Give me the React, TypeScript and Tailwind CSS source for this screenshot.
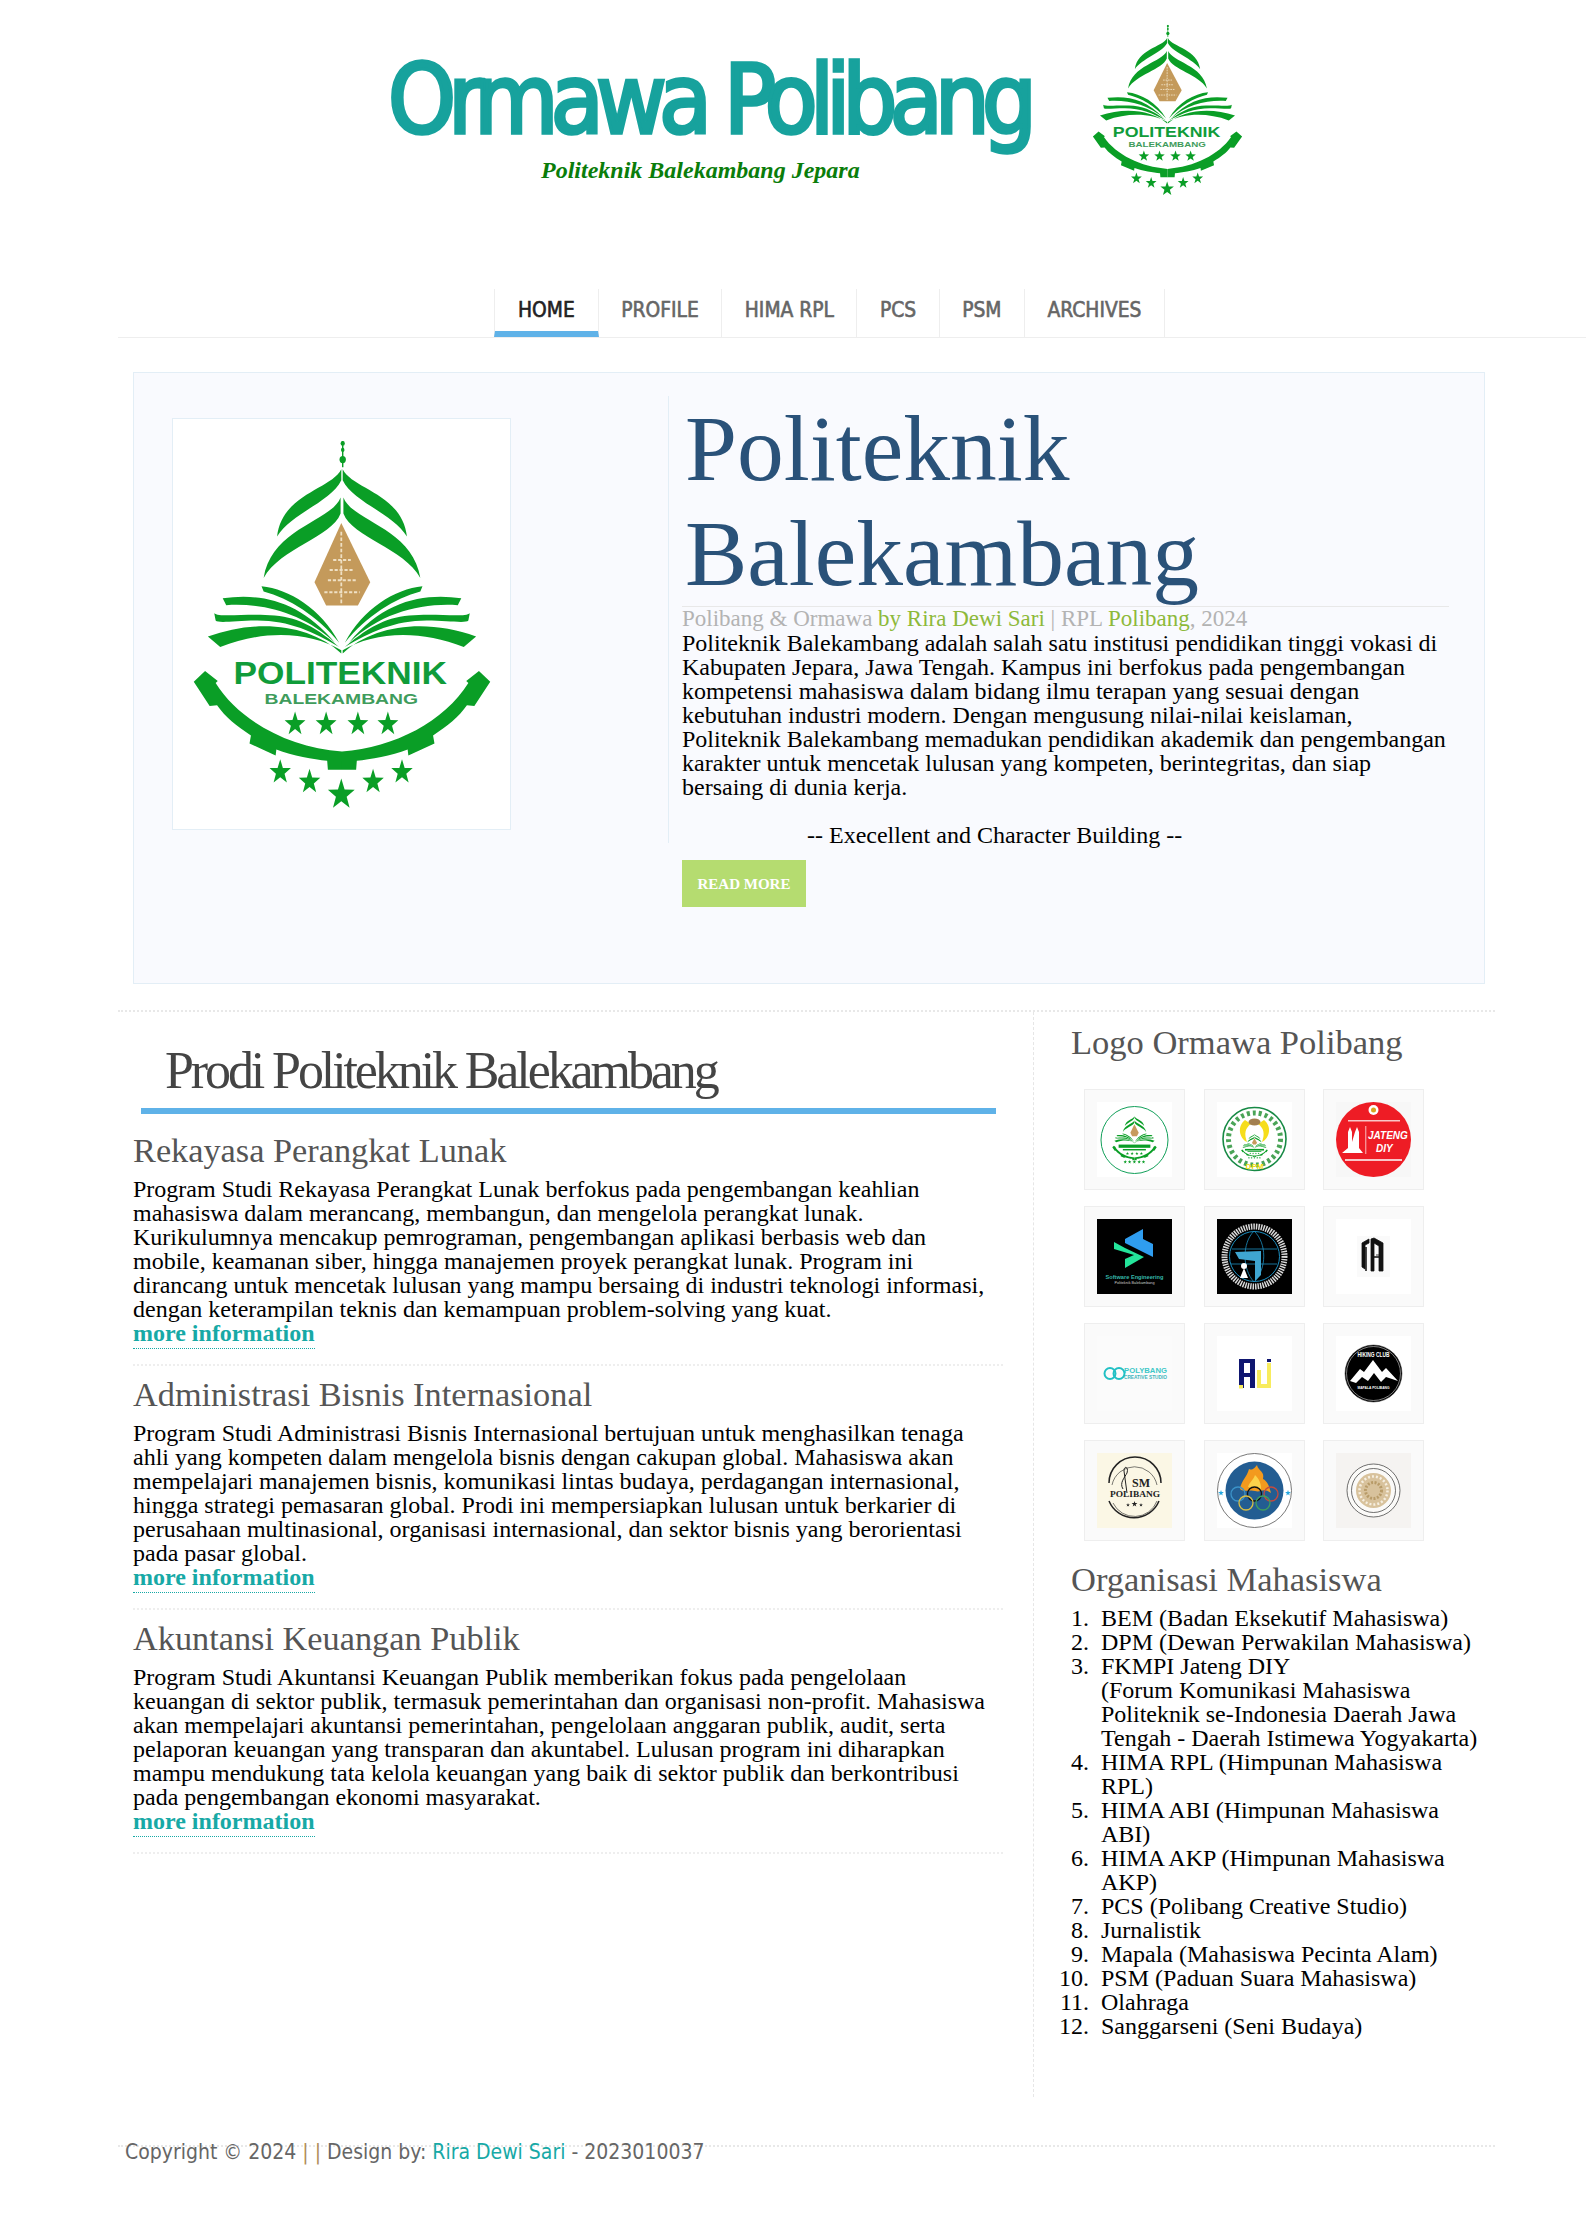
import React from 'react';

const starPoints = (cx: number, cy: number, r: number) => {
  const pts: string[] = [];
  for (let i = 0; i < 10; i++) {
    const rad = i % 2 === 0 ? r : r * 0.4;
    const a = (Math.PI / 5) * i - Math.PI / 2;
    pts.push(`${(cx + rad * Math.cos(a)).toFixed(1)},${(cy + rad * Math.sin(a)).toFixed(1)}`);
  }
  return pts.join(' ');
};

// half of the emblem, mirrored for the right side
const EmblemHalf = ({ color }: { color: string }) => (
  <g fill={color}>
    <path d="M618 265C590 315 450 325 436 432C475 375 590 345 618 292Z" />
    <path d="M616 335C590 395 420 410 398 535C445 460 590 435 616 375Z" />
    <path d="M392 555C470 562 560 610 612 695C550 628 470 585 398 568Z" />
    <path d="M282 585C390 572 500 590 600 695C510 622 400 596 292 602Z" />
    <path d="M258 622C275 636 400 615 480 636C540 652 590 690 612 706C540 668 470 640 380 640C320 640 270 648 262 640Z" />
    <path d="M240 680C380 635 530 650 618 722L618 714C530 668 400 662 275 706Z" />
    <path d="M232 765L268 790L262 795C330 890 470 955 620 965L620 1010L580 1010L578 988C540 985 480 975 434 960L432 975L358 945L362 925C320 900 290 880 266 850L245 852L200 792Z" />
  </g>
);

const PolibangEmblem = ({ className }: { className: string }) => {
  const green = '#0a9e26';
  return (
    <svg viewBox="195 190 850 920" preserveAspectRatio="none" className={className}>
      <g fill={green}>
        <rect x="620" y="195" width="4" height="65" />
        <circle cx="622" cy="201" r="6" />
        <circle cx="622" cy="217" r="5" />
        <circle cx="622" cy="241" r="9" />
      </g>
      <EmblemHalf color={green} />
      <g transform="matrix(-1 0 0 1 1240 0)">
        <EmblemHalf color={green} />
      </g>
      <path d="M618 398L700 545L665 603L575 603L542 545Z" fill="#c49a5b" />
      <path d="M618 420V600M580 540H660M570 570H670M595 490H645M585 515H650" stroke="#efe0c4" strokeWidth="5" strokeDasharray="9 5" fill="none" />
      <text x="615" y="797" textAnchor="middle" textLength="605" lengthAdjust="spacingAndGlyphs" fontFamily="Liberation Sans" fontWeight="700" fontSize="78" fill="#109c3a">POLITEKNIK</text>
      <text x="618" y="846" textAnchor="middle" textLength="435" lengthAdjust="spacingAndGlyphs" fontFamily="Liberation Sans" fontWeight="700" fontSize="38" fill="#3f9c5c">BALEKAMBANG</text>
      <g fill={green}>
        {[487, 575, 665, 750].map((x) => (
          <polygon key={x} points={starPoints(x, 897, 31)} />
        ))}
        {[[445, 1016, 32], [528, 1040, 32], [618, 1072, 40], [708, 1040, 32], [790, 1016, 32]].map(([x, y, r]) => (
          <polygon key={x} points={starPoints(x, y, r)} />
        ))}
      </g>
    </svg>
  );
};

const TileSvg = ({ children, bg = '#ffffff' }: { children: React.ReactNode; bg?: string }) => (
  <svg viewBox="0 0 75 75" className="h-[75px] w-[75px]">
    <rect width="75" height="75" fill={bg} />
    {children}
  </svg>
);

const MiniEmblem = ({ x, y, w, h }: { x: number; y: number; w: number; h: number }) => (
  <svg x={x} y={y} width={w} height={h} viewBox="195 190 850 920" preserveAspectRatio="none">
    <g fill="#0a9e26">
      <EmblemHalf color="#0a9e26" />
      <g transform="matrix(-1 0 0 1 1240 0)">
        <EmblemHalf color="#0a9e26" />
      </g>
      <path d="M618 398L700 545L665 603L575 603L542 545Z" fill="#c79a5d" />
      <rect x="320" y="745" width="600" height="55" />
      <rect x="400" y="820" width="435" height="25" />
      {[487, 575, 665, 750].map((x) => (
        <polygon key={x} points={starPoints(x, 897, 31)} />
      ))}
      {[445, 528, 618, 708, 790].map((x) => (
        <polygon key={x} points={starPoints(x, 1040, 34)} />
      ))}
    </g>
  </svg>
);

const logos: React.ReactNode[] = [
  <TileSvg key="bem">
    <circle cx="37.5" cy="38" r="33.5" fill="none" stroke="#12a05a" strokeWidth="1" />
    <MiniEmblem x={15} y={10} w={45} h={54} />
  </TileSvg>,
  <TileSvg key="dpm">
    <circle cx="37.5" cy="37" r="31.5" fill="#fff" stroke="#178a45" strokeWidth="1.6" />
    <circle cx="37.5" cy="37" r="26" fill="none" stroke="#4aa457" strokeWidth="5" strokeDasharray="3 3" />
    <path d="M28 18C20 24 22 36 30 40C27 32 28 26 34 22ZM47 18C55 24 53 36 45 40C48 32 47 26 41 22Z" fill="#f6dd1b" />
    <ellipse cx="37.5" cy="20" rx="6" ry="3.5" fill="#a27f50" />
    <MiniEmblem x={24} y={30} w={27} h={28} />
    <text x="37.5" y="67" textAnchor="middle" fontFamily="Liberation Sans" fontWeight="700" fontSize="8" fill="#f2de12">DPM</text>
  </TileSvg>,
  <TileSvg key="fkmpi" bg="#f7f7f7">
    <circle cx="37.5" cy="37.5" r="37.5" fill="#ee1c25" />
    <circle cx="37.5" cy="8" r="5" fill="#fff" />
    <circle cx="37.5" cy="8" r="2.5" fill="#d9a320" />
    <rect x="12" y="18" width="52" height="1.5" fill="#f9c6c8" />
    <path d="M6 51L12 46V30L14 25L16 30V40L19 30L21 25L23 30V46L27 51Z" fill="#fff" />
    <rect x="29.5" y="24" width="0.7" height="28" fill="#fff" />
    <text x="32" y="37" fontFamily="Liberation Sans" fontWeight="700" fontStyle="italic" fontSize="10" fill="#fff">JATENG</text>
    <text x="40" y="50" fontFamily="Liberation Sans" fontWeight="700" fontStyle="italic" fontSize="10" fill="#fff">DIY</text>
    <rect x="9" y="57" width="57" height="2" fill="#f9c6c8" />
  </TileSvg>,
  <TileSvg key="rpl" bg="#000000">
    <path d="M28 20L46 10V20L56 25V38L28 24Z" fill="#2f9df0" />
    <path d="M17 23L28 29L47 38L28 49V40L37 36L17 30Z" fill="#24e59b" />
    <text x="37.5" y="60" textAnchor="middle" textLength="58" lengthAdjust="spacingAndGlyphs" fontFamily="Liberation Sans" fontWeight="700" fontSize="5.5" fill="#35b7a8">Software Engineering</text>
    <text x="37.5" y="65" textAnchor="middle" textLength="40" lengthAdjust="spacingAndGlyphs" fontFamily="Liberation Sans" fontSize="3" fill="#cccccc">Politeknik Balekambang</text>
  </TileSvg>,
  <TileSvg key="abi" bg="#000000">
    <circle cx="37.5" cy="37.5" r="30" fill="none" stroke="#d9d9d9" strokeWidth="6" strokeDasharray="1.5 1" />
    <circle cx="37.5" cy="37.5" r="25" fill="none" stroke="#1d8fc0" strokeWidth="1" />
    <path d="M15 30H60M14 45H60M37 12C25 24 25 50 37 63M37 12C50 24 50 50 37 63" stroke="#1d8fc0" strokeWidth="0.8" fill="none" />
    <path d="M18 33L44 32V56L38 62V42L22 40Z" fill="#3fa5d0" />
    <circle cx="27" cy="47" r="3" fill="#fff" />
    <path d="M23 59L27 49L31 59Z" fill="#fff" />
  </TileSvg>,
  <TileSvg key="akp">
    <rect x="21" y="17" width="33" height="41" fill="#fafafa" />
    <path d="M33 20L26 24V48L29 50V26L33 24ZM38 19L47 24V52H43V27L38 24V52H35V20ZM40 36H43" fill="#111" stroke="#111" strokeWidth="0.8" />
    <path d="M30 52V28M44 38H36" stroke="#111" strokeWidth="1.5" />
  </TileSvg>,
  <TileSvg key="pcs" bg="#fbfbfb">
    <circle cx="13" cy="37.5" r="5.5" fill="none" stroke="#21c0c4" strokeWidth="2" />
    <circle cx="22" cy="37.5" r="5.5" fill="none" stroke="#21c0c4" strokeWidth="2" />
    <text x="27" y="37" textLength="43" lengthAdjust="spacingAndGlyphs" fontFamily="Liberation Sans" fontWeight="700" fontSize="8" fill="#3fc8c8">POLYBANG</text>
    <text x="27" y="43" textLength="43" lengthAdjust="spacingAndGlyphs" fontFamily="Liberation Sans" fontWeight="700" fontSize="5" fill="#3fb5bb">CREATIVE STUDIO</text>
  </TileSvg>,
  <TileSvg key="ali">
    <path d="M22 23H38V52H33V41H27V52H22ZM27 27V37H33V27Z" fill="#0f1670" />
    <rect x="22" y="49" width="4" height="3.5" fill="#f8ec5e" />
    <path d="M40 34H44V48H50V27H54V52H40Z" fill="#f8ec5e" />
    <rect x="50" y="23" width="4" height="3" fill="#0f1670" />
  </TileSvg>,
  <TileSvg key="mapala">
    <circle cx="37.5" cy="37.5" r="28.5" fill="#000" stroke="#333" strokeWidth="0.5" />
    <circle cx="37.5" cy="37.5" r="27" fill="none" stroke="#fff" strokeWidth="0.5" />
    <path d="M14 45L24 33L28 36L37 24L46 36L50 32L62 45L50 41L45 46L38 37L32 45L26 41L20 47Z" fill="#fff" />
    <text x="37.5" y="21" textAnchor="middle" textLength="32" lengthAdjust="spacingAndGlyphs" fontFamily="Liberation Sans" fontWeight="700" fontSize="6.5" fill="#fff">HIKING CLUB</text>
    <text x="37.5" y="53" textAnchor="middle" textLength="32" lengthAdjust="spacingAndGlyphs" fontFamily="Liberation Sans" fontWeight="700" fontSize="3.6" fill="#fff">MAPALA POLIBANG</text>
  </TileSvg>,
  <TileSvg key="psm" bg="#fbf7e5">
    <path d="M12 30A26 26 0 0 1 64 30M12 48A27 27 0 0 0 62 48" fill="none" stroke="#222" strokeWidth="1.5" />
    <path d="M15 32A23 23 0 0 1 60 32M16 50A24 24 0 0 0 60 48" fill="none" stroke="#222" strokeWidth="0.6" />
    <path d="M26 36C22 30 28 24 30 20C32 14 27 12 27 18L30 40" fill="none" stroke="#222" strokeWidth="1" />
    <text x="35" y="34" fontFamily="Liberation Serif" fontWeight="700" fontSize="12" fill="#222">SM</text>
    <text x="38" y="44" textAnchor="middle" textLength="50" lengthAdjust="spacingAndGlyphs" fontFamily="Liberation Serif" fontWeight="700" fontSize="9" fill="#222">POLIBANG</text>
    <polygon points={starPoints(37.5, 51, 3)} fill="#222" />
    <polygon points={starPoints(31, 52, 2)} fill="#222" />
    <polygon points={starPoints(44, 52, 2)} fill="#222" />
  </TileSvg>,
  <TileSvg key="olahraga">
    <circle cx="37.5" cy="37.5" r="37" fill="#fff" stroke="#555" strokeWidth="0.8" />
    <circle cx="37.5" cy="37.5" r="29" fill="#235d92" />
    <path d="M23 36C24 28 30 24 32 16C36 18 38 14 40 12C41 18 48 18 46 26C50 28 52 32 54 40C46 34 44 40 38 38C32 36 28 40 23 36Z" fill="#f39a1e" />
    <path d="M31 34C33 28 36 28 38 22C42 26 44 30 44 36C40 34 36 36 31 34Z" fill="#fbd24a" />
    <circle cx="21" cy="41" r="7" fill="none" stroke="#3c93c9" strokeWidth="1.3" />
    <circle cx="37.5" cy="41" r="7" fill="none" stroke="#111" strokeWidth="1.3" />
    <circle cx="54" cy="41" r="7" fill="none" stroke="#c64a3e" strokeWidth="1.3" />
    <circle cx="29" cy="50" r="7" fill="none" stroke="#d8bf45" strokeWidth="1.3" />
    <circle cx="46" cy="50" r="7" fill="none" stroke="#3f9e5d" strokeWidth="1.3" />
    <polygon points={starPoints(4, 40, 3)} fill="#24a7e0" />
    <polygon points={starPoints(71, 40, 3)} fill="#24a7e0" />
  </TileSvg>,
  <TileSvg key="seni" bg="#f5f3f1">
    <circle cx="37.5" cy="37.5" r="26.5" fill="#fbfaf8" stroke="#333" strokeWidth="0.7" />
    <circle cx="37.5" cy="37.5" r="22" fill="none" stroke="#333" strokeWidth="0.7" />
    <circle cx="37.5" cy="37.5" r="17.5" fill="#d8c29c" />
    <circle cx="37.5" cy="37.5" r="14" fill="none" stroke="#f6efe1" strokeWidth="2.5" strokeDasharray="2 2" />
    <circle cx="37.5" cy="37.5" r="8" fill="none" stroke="#b89b68" strokeWidth="3" strokeDasharray="2 1.5" />
  </TileSvg>,
];

const prodi = [
  {
    title: 'Rekayasa Perangkat Lunak',
    text: 'Program Studi Rekayasa Perangkat Lunak berfokus pada pengembangan keahlian mahasiswa dalam merancang, membangun, dan mengelola perangkat lunak. Kurikulumnya mencakup pemrograman, pengembangan aplikasi berbasis web dan mobile, keamanan siber, hingga manajemen proyek perangkat lunak. Program ini dirancang untuk mencetak lulusan yang mampu bersaing di industri teknologi informasi, dengan keterampilan teknis dan kemampuan problem-solving yang kuat.',
  },
  {
    title: 'Administrasi Bisnis Internasional',
    text: 'Program Studi Administrasi Bisnis Internasional bertujuan untuk menghasilkan tenaga ahli yang kompeten dalam mengelola bisnis dengan cakupan global. Mahasiswa akan mempelajari manajemen bisnis, komunikasi lintas budaya, perdagangan internasional, hingga strategi pemasaran global. Prodi ini mempersiapkan lulusan untuk berkarier di perusahaan multinasional, organisasi internasional, dan sektor bisnis yang berorientasi pada pasar global.',
  },
  {
    title: 'Akuntansi Keuangan Publik',
    text: 'Program Studi Akuntansi Keuangan Publik memberikan fokus pada pengelolaan keuangan di sektor publik, termasuk pemerintahan dan organisasi non-profit. Mahasiswa akan mempelajari akuntansi pemerintahan, pengelolaan anggaran publik, audit, serta pelaporan keuangan yang transparan dan akuntabel. Lulusan program ini diharapkan mampu mendukung tata kelola keuangan yang baik di sektor publik dan berkontribusi pada pengembangan ekonomi masyarakat.',
  },
];

const navItems = ['HOME', 'PROFILE', 'HIMA RPL', 'PCS', 'PSM', 'ARCHIVES'];

const App: React.FC = () => {
  return (
    <div className="min-h-[2239px] bg-white font-['Liberation_Serif',serif] text-[24px] leading-[24px] text-black">
      {/* Header */}
      <header className="flex h-[289px] items-start pl-[388px]">
        <div className="w-[704px]">
          <h1 className="mt-[52px] font-['DejaVu_Sans',sans-serif] text-[96px] leading-[96px] tracking-[-7.7px] whitespace-nowrap text-[#17a29d] [-webkit-text-stroke:3.5px_#17a29d] [font-stretch:condensed]">
            Ormawa Polibang
          </h1>
          <p className="mt-[9px] pl-[153px] text-[24px] leading-[26px] font-bold text-[#0a7d0a] italic">
            Politeknik Balekambang Jepara
          </p>
        </div>
        <PolibangEmblem className="mt-[24px] h-[172px] w-[151px]" />
      </header>

      {/* Navigation */}
      <nav className="ml-[118px] flex h-[49px] border-b border-[#eeeeee] pl-[376px] font-['DejaVu_Sans',sans-serif] text-[20.8px] [-webkit-text-stroke:0.6px] [font-stretch:condensed]">
        {navItems.map((item, i) => (
          <a
            key={item}
            className={
              i === 0
                ? 'flex h-[48px] items-center border-x border-[#eeeeee] border-b-[6px] border-b-[#5fb2e8] px-[23px] text-[#222222]'
                : 'flex h-[48px] items-center border-r border-[#eeeeee] px-[22.5px] pb-[6px] text-[#666666]'
            }
          >
            {item}
          </a>
        ))}
      </nav>

      {/* Hero */}
      <section className="mt-[34px] ml-[133px] flex h-[612px] w-[1352px] border border-[#e3eef6] bg-[#f9fafe] pt-[30px] pl-[38px]">
        <div className="mt-[15px] flex h-[412px] w-[339px] items-center justify-center border border-[#e3eef6] bg-white">
          <PolibangEmblem className="h-[371px] w-[300px]" />
        </div>
        <div className="ml-[157px] w-[781px]">
          <div className="h-[447px] border-l border-[#e3eef6] pl-[13px]">
            <h2 className="-mt-[7px] border-b border-[#e8e8e8] pl-[3px] text-[93.5px] leading-[105px] text-[#2a5279]">
              Politeknik Balekambang
            </h2>
            <p className="text-[23px] text-[#b3b3b3]">
              Polibang &amp; Ormawa <span className="text-[#8db93a]">by Rira Dewi Sari</span> | RPL{' '}
              <span className="text-[#8db93a]">Polibang</span>, 2024
            </p>
            <p>
              Politeknik Balekambang adalah salah satu institusi pendidikan tinggi vokasi di Kabupaten Jepara, Jawa
              Tengah. Kampus ini berfokus pada pengembangan kompetensi mahasiswa dalam bidang ilmu terapan yang sesuai
              dengan kebutuhan industri modern. Dengan mengusung nilai-nilai keislaman, Politeknik Balekambang memadukan
              pendidikan akademik dan pengembangan karakter untuk mencetak lulusan yang kompeten, berintegritas, dan
              siap bersaing di dunia kerja.
            </p>
            <p className="mt-[24px] pl-[125px]">-- Execellent and Character Building --</p>
          </div>
          <a className="mt-[17px] ml-[14px] flex h-[47px] w-[124px] items-center justify-center bg-[#b5dc70] text-[15px] font-bold text-white">
            READ MORE
          </a>
        </div>
      </section>

      {/* Main */}
      <main className="mt-[26px] ml-[118px] flex w-[1377px] border-t-2 border-dotted border-[#e8e8e8]">
        <div className="w-[915px] pt-[31px] pl-[15px]">
          <h2 className="mb-[8px] ml-[8px] w-[855px] border-b-[6px] border-[#5fb2e8] pb-[9px] pl-[24px] text-[52px] leading-[56px] tracking-[-3.1px] text-[#444444]">
            Prodi Politeknik Balekambang
          </h2>
          {prodi.map((p) => (
            <article key={p.title} className="w-[870px] border-b-2 border-dotted border-[#eeeeee] pt-[8px] pb-[15px]">
              <h3 className="text-[34.3px] leading-[40px] text-[#555555]">{p.title}</h3>
              <p className="mt-[7px] w-[860px]">{p.text}</p>
              <a className="inline-block border-b border-dotted border-[#17a9a6] pb-[3px] font-bold text-[#17a9a6]">
                more information
              </a>
            </article>
          ))}
        </div>
        <aside className="h-[1085px] w-[462px] border-l border-dashed border-[#e6e6e6] pl-[37px]">
          <h3 className="pt-[10px] text-[34.5px] leading-[40px] text-[#555555]">Logo Ormawa Polibang</h3>
          <div className="mt-[27px] ml-[13px] grid w-[340px] grid-cols-[101px_101px_101px] gap-x-[18.5px] gap-y-[16px]">
            {logos.map((logo, i) => (
              <div key={i} className="flex h-[101px] w-[101px] items-center justify-center border border-[#eeeeee] bg-[#fafafa]">
                {logo}
              </div>
            ))}
          </div>
          <h3 className="mt-[18px] text-[34.5px] leading-[40px] text-[#555555]">Organisasi Mahasiswa</h3>
          <ol className="mt-[7px] w-[415px] list-decimal pl-[30px] marker:[content:counter(list-item)'.__']">
            <li>BEM (Badan Eksekutif Mahasiswa)</li>
            <li>DPM (Dewan Perwakilan Mahasiswa)</li>
            <li>
              FKMPI Jateng DIY
              <br />
              (Forum Komunikasi Mahasiswa Politeknik se-Indonesia Daerah Jawa Tengah - Daerah Istimewa Yogyakarta)
            </li>
            <li>HIMA RPL (Himpunan Mahasiswa RPL)</li>
            <li>HIMA ABI (Himpunan Mahasiswa ABI)</li>
            <li>HIMA AKP (Himpunan Mahasiswa AKP)</li>
            <li>PCS (Polibang Creative Studio)</li>
            <li>Jurnalistik</li>
            <li>Mapala (Mahasiswa Pecinta Alam)</li>
            <li>PSM (Paduan Suara Mahasiswa)</li>
            <li>Olahraga</li>
            <li>Sanggarseni (Seni Budaya)</li>
          </ol>
        </aside>
      </main>

      {/* Footer */}
      <footer className="mt-[48px] ml-[118px] w-[1377px] border-t-2 border-dotted border-[#e8e8e8] pl-[7px] font-['DejaVu_Sans',sans-serif] text-[21px] leading-[14px] text-[#666666] [font-stretch:condensed]">
        <p className="-mt-[2px]">
          Copyright © 2024 <span className="text-[#b08d57]">| |</span> Design by:{' '}
          <a className="text-[#17a9a6]">Rira Dewi Sari</a> - 2023010037
        </p>
      </footer>
    </div>
  );
};

export default App;
